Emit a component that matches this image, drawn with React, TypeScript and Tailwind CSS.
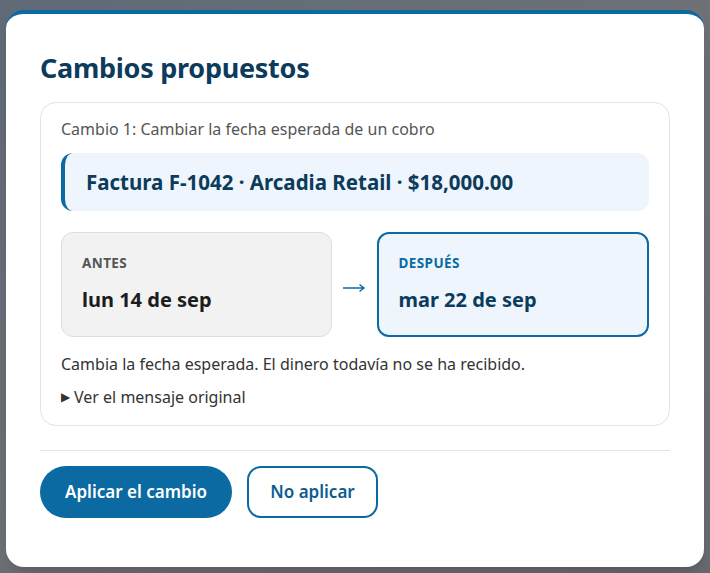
function DateBox({ label, value, after }: { label: string; value: string; after?: boolean }) {
  return (
    <div
      className={
        after
          ? 'flex-1 h-[105px] rounded-xl border-2 border-[#0b6aa2] bg-[#eef5fd] px-[20px] pt-[20px]'
          : 'flex-1 h-[105px] rounded-xl border border-[#dedede] bg-[#f2f2f2] px-[20px] pt-[21px]'
      }
    >
      <div
        className={
          'text-[13.5px] font-bold tracking-[0.03em] leading-[18px] ' +
          (after ? 'text-[#0b6aa2]' : 'text-[#555555]')
        }
      >
        {label}
      </div>
      <div
        className={
          'mt-[14px] text-[20px] font-bold leading-[28px] ' + (after ? 'text-[#0c3b5c]' : 'text-[#1c1c1c]')
        }
      >
        {value}
      </div>
    </div>
  );
}

export default function App() {
  return (
    <div
      className="w-[710px] h-[573px] bg-gradient-to-br from-[#5f6a77] via-[#6d7176] to-[#676a70] pt-[10px] px-[6px]"
      style={{ fontFamily: '"Noto Sans", "Open Sans", sans-serif' }}
    >
      <div className="h-[557px] rounded-[18px] bg-white border-t-4 border-[#0b6aa2] px-[34px] pt-[34px] shadow-xl">
        {/* título */}
        <h2 className="text-[27px] font-bold leading-[40px] text-[#0c3b5c] tracking-[-0.01em]">Cambios propuestos</h2>

        {/* tarjeta del cambio */}
        <div className="mt-[14px] rounded-2xl border border-[#e3e3e3] px-[20px] pt-[14px] pb-[16px]">
          <p className="text-[16px] leading-[24px] text-[#555555]">Cambio 1: Cambiar la fecha esperada de un cobro</p>

          <div className="mt-[12px] h-[58px] rounded-xl border-l-4 border-[#0b6aa2] bg-[#eef5fd] pl-[21px] flex items-center">
            <span className="text-[20.5px] font-bold text-[#0c3b5c]">Factura F-1042 · Arcadia Retail · $18,000.00</span>
          </div>

          <div className="mt-[21px] flex items-center">
            <DateBox label="ANTES" value="lun 14 de sep" />
            <div className="w-[45px] flex justify-center pt-[6px]">
              <svg width="24" height="10" viewBox="0 0 24 10" fill="none" stroke="#0b6aa2" strokeWidth="1.4">
                <path d="M1 5h21M17.5 1.5 22 5l-4.5 3.5" />
              </svg>
            </div>
            <DateBox label="DESPUÉS" value="mar 22 de sep" after />
          </div>

          <p className="mt-[15px] text-[16px] leading-[24px] text-[#333333]">
            Cambia la fecha esperada. El dinero todavía no se ha recibido.
          </p>
          <p className="mt-[9px] text-[16px] leading-[24px] text-[#333333] flex items-center gap-[4px]">
            <span className="text-[12px]">▶</span>
            <span>Ver el mensaje original</span>
          </p>
        </div>

        <div className="mt-[24px] border-t border-[#e3e3e3]" />

        {/* acciones */}
        <div className="mt-[15px] flex gap-[15px]">
          <button className="h-[52px] w-[192px] rounded-full bg-[#0b6aa2] text-white text-[17px] font-semibold">
            Aplicar el cambio
          </button>
          <button className="h-[52px] w-[131px] rounded-[14px] border-2 border-[#0b6aa2] bg-white text-[#0b5d90] text-[17px] font-semibold">
            No aplicar
          </button>
        </div>
      </div>
    </div>
  );
}
